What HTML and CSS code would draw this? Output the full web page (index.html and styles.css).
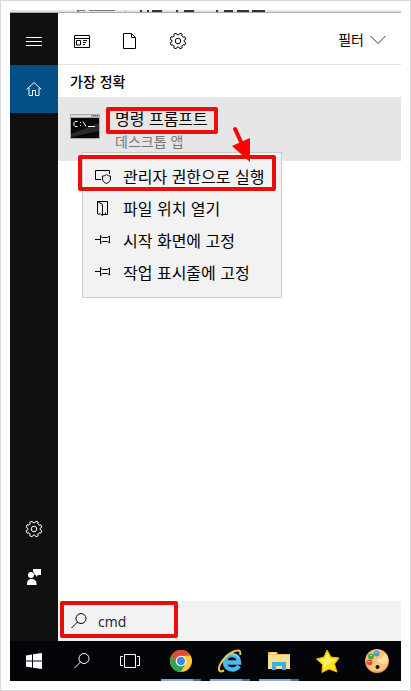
FILE: index.html
```
<!DOCTYPE html>
<html lang="ko">
<head>
    <meta charset="UTF-8">
    <meta name="viewport" content="width=device-width, initial-scale=1.0">
    <title>명령 프롬프트</title>
    <link rel="stylesheet" href="styles.css">
</head>
<body>
    <!-- Shared icon shapes -->
    <svg class="defs" aria-hidden="true">
        <symbol id="gear" viewBox="-9 -9 18 18">
            <path d="M7.8 1.9 6.8 4.2 5 3.8 3.8 5 4.2 6.8 1.9 7.8.9 6.2-.9 6.2-1.9 7.8-4.2 6.8-3.8 5-5 3.8-6.8 4.2-7.8 1.9-6.2.9-6.2-.9-7.8-1.9-6.8-4.2-5-3.8-3.8-5-4.2-6.8-1.9-7.8-.9-6.2.9-6.2 1.9-7.8 4.2-6.8 3.8-5 5-3.8 6.8-4.2 7.8-1.9 6.2-.9 6.2.9Z"/>
            <circle r="2.8"/>
        </symbol>
        <symbol id="search" viewBox="0 0 18 18">
            <circle cx="11" cy="6.500" r="5"/>
            <path d="M7.500 10 1.500 16"/>
        </symbol>
        <symbol id="pin" viewBox="0 0 18 18">
            <path d="M1 8.500h5.500M6.500 4v9M6.500 5.500l2 1h5l2-1.500v7l-2-1.500h-5l-2 1"/>
        </symbol>
    </svg>

    <div class="frame">
        <!-- Bottom edge of the window behind -->
        <div class="behind">
            <svg width="260" height="3" aria-hidden="true">
                <path stroke="#777" d="M67 .5h8M67 1.500h2M79 .5h26"/>
                <path stroke="#bbb" d="M115.500 0v2"/>
                <path stroke="#333" stroke-width="2" d="M131 0v2M138 0v2M142 1h10M167 0v2M175 1h9M175 0v2M183 0v2M207 0v2M214 1h9M227 1h12M242 1h13"/>
            </svg>
        </div>

        <div class="start">
            <nav class="sidebar">
                <button class="side-btn menu-btn" aria-label="메뉴">
                    <svg class="icon" width="18" height="18"><path d="M1 5.500h16M1 9.500h16M1 13.500h16"/></svg>
                </button>
                <button class="side-btn home-btn" aria-label="홈">
                    <svg class="icon" width="18" height="18"><path d="M1.500 9.500 9 2.500l7.500 7M4 8v7.500h3.500v-5h3v5H14V8"/></svg>
                </button>
                <div class="spacer"></div>
                <button class="side-btn" aria-label="설정">
                    <svg class="icon" width="18" height="18"><use href="#gear"/></svg>
                </button>
                <button class="side-btn" aria-label="피드백">
                    <svg width="18" height="18" fill="#fff"><path d="M8 1h8v6h-3l-2 2V7H9.500A4 4 0 0 0 8 3.500Z"/><circle cx="6" cy="7" r="3"/><path d="M2 17v-1.500C2 12.500 4 11 6.500 11s5 1.500 5 4.500V17Z"/></svg>
                </button>
            </nav>

            <main class="panel">
                <header class="toolbar">
                    <button class="tool" aria-label="앱">
                        <svg class="icon" width="18" height="18"><path d="M1.500 3.500h15v12h-15zM1.500 6.500h15M3.500 8.500h4v4.500h-4zM10 8.500h4M10 10.500h3M10 12.500h2"/></svg>
                    </button>
                    <button class="tool" aria-label="문서">
                        <svg class="icon" width="18" height="18"><path d="M2.500 1.500h8l4 4v11h-12zM10.500 1.500v4h4"/></svg>
                    </button>
                    <button class="tool" aria-label="설정">
                        <svg class="icon" width="18" height="18"><use href="#gear"/></svg>
                    </button>
                    <button class="filter">필터
                        <svg class="icon" width="16" height="18"><path d="M.5 6 8 13.500 15.500 6"/></svg>
                    </button>
                </header>

                <h2 class="group-title">가장 정확</h2>

                <div class="result">
                    <svg class="app-icon" width="30" height="26" aria-hidden="true">
                        <path fill="#aaa" d="M0 0h30v25H0z"/>
                        <path fill="#ddd" d="M1 1h20v2H1z"/>
                        <path fill="#555" d="M23 1h1v1h-1zM25 1h1v1h-1zM27 1h1v1h-1z"/>
                        <path fill="#080808" d="M1 4h28v20H1z"/>
                        <path fill="#2a2a2a" d="M1 20 29 9v8L1 23z"/>
                        <path fill="none" stroke="#fff" d="M7.500 7.500H5l-1 1v3l1 1h2.500M10 8.500h1M10 11.500h1M13 7.500l3 5M18 12.500h7"/>
                    </svg>
                    <div class="result-text">
                        <a class="result-name" href="#">명령 프롬프트<span class="mark mark-name"></span></a>
                        <span class="result-type">데스크톱 앱</span>
                    </div>

                    <ul class="context-menu">
                        <li>
                            <button class="menu-item">
                                <svg class="icon" width="18" height="18"><path d="M7 12.500H1.500v-9h14V7"/><path d="M12.500 7.500c1 1 2.500 1.500 4 1.500v3c0 2-1.500 3.500-4 4.500-2.500-1-4-2.500-4-4.500V9c1.500 0 3-.5 4-1.500Z"/></svg>
                                관리자 권한으로 실행
                            </button>
                            <span class="mark mark-item"></span>
                        </li>
                        <li>
                            <button class="menu-item">
                                <svg class="icon" width="18" height="18"><path d="M3.500 2.500h10v13h-5M3.500 2.500l5 3v11l-2-1.500H3.500zM11.500 13.500v2"/></svg>
                                파일 위치 열기
                            </button>
                        </li>
                        <li>
                            <button class="menu-item">
                                <svg class="icon" width="18" height="18"><use href="#pin"/></svg>
                                시작 화면에 고정
                            </button>
                        </li>
                        <li>
                            <button class="menu-item">
                                <svg class="icon" width="18" height="18"><use href="#pin"/></svg>
                                작업 표시줄에 고정
                            </button>
                        </li>
                    </ul>

                    <svg class="arrow" width="20" height="38" aria-hidden="true">
                        <path stroke="#f00" stroke-width="4" stroke-linecap="round" d="M4 4l7 15"/>
                        <path fill="#f00" d="M1 21 19 13v24z"/>
                    </svg>
                </div>

                <div class="spacer"></div>

                <div class="search">
                    <svg class="icon" width="18" height="18"><use href="#search"/></svg>
                    <input type="text" value="cmd" aria-label="검색">
                    <span class="mark mark-search"></span>
                </div>
            </main>
        </div>

        <footer class="taskbar">
            <button class="task" aria-label="시작">
                <svg width="18" height="18" fill="#fff"><path d="M1 3.500 7 2.500V8.500H1zM8 2.300 17 1v7.500H8zM1 9.500h6v6L1 14.700zM8 9.500h9V17l-9-1.300z"/></svg>
            </button>
            <button class="task" aria-label="검색">
                <svg class="icon" width="18" height="18"><use href="#search"/></svg>
            </button>
            <button class="task" aria-label="작업 보기">
                <svg class="icon" width="20" height="18"><path d="M4.500 2.500h11v13h-11zM3 4.500H.5v9H3M17 4.500h2.500v9H17"/></svg>
            </button>
            <div class="apps">
                <button class="task app running" aria-label="Chrome">
                    <svg width="24" height="24" viewBox="-12 -12 24 24">
                        <circle r="11" fill="#fc3"/>
                        <path fill="#df4b3d" d="M-9.500-5.500A11 11 0 0 1 9.500-5.500L0-5-4.500 2.500Z"/>
                        <path fill="#2fa455" d="M-9.500-5.500A11 11 0 0 0 0 11L4.500 2.500 0 5-4.300 2.500Z"/>
                        <circle r="5.300" fill="#fff"/>
                        <circle r="4.200" fill="#4586ea"/>
                    </svg>
                </button>
                <button class="task app running" aria-label="Internet Explorer">
                    <svg width="26" height="26" viewBox="0 0 26 26" fill="none">
                        <path stroke="#49b9ee" stroke-width="4.500" d="M8 14.500h14C22 9.500 19 7 15 7S8 10 8 14.500s3 7 7.500 7c3 0 5-1.500 6.500-3.500"/>
                        <path stroke="#a8e3fb" d="M7 12c1-4 4-6 8-6 3 0 6 2 7 4"/>
                        <path stroke="#edc344" stroke-width="2" d="M23 7c1-3 0-5-3-4.500C13 3.500 3 13 2 20c-.5 4 2 4 5 2.500"/>
                    </svg>
                </button>
                <button class="task app running" aria-label="파일 탐색기">
                    <svg width="24" height="22">
                        <path fill="#e9bd58" d="M1 2h9l1 2h12v15H1z"/>
                        <path fill="#fadf93" d="M1 5h22v14H1z"/>
                        <path fill="#fff" d="M3 3h6v1H3z"/>
                        <path fill="#3faee0" d="M5 20v-8h14v8h-4v-4H9v4z"/>
                    </svg>
                </button>
                <button class="task app" aria-label="즐겨찾기">
                    <svg width="26" height="26">
                        <path fill="#ffe01c" stroke="#f4b900" stroke-linejoin="round" d="M12 2l4 7 8 1-4.500 6 2.500 8-8-3-7 3.500.5-8L1.500 11l7.500-2Z"/>
                        <path fill="#fff36a" d="M12 5l2.500 6 6 .5L15 15l-7 5 1-6-4-2.500 5-1Z"/>
                    </svg>
                </button>
                <button class="task app" aria-label="그림판">
                    <svg width="26" height="26">
                        <circle cx="13" cy="13" r="12" fill="#e99a4c"/>
                        <circle cx="13" cy="12.500" r="11" fill="#f9c57c"/>
                        <path fill="#fbdca5" d="M13 12c4-1 8-4 8-7 3 3 4 8 2 11-3 0-8 0-10-4Z"/>
                        <circle cx="12.500" cy="5.500" r="3" fill="#3fa0c8"/>
                        <circle cx="7" cy="8.500" r="3" fill="#55a63d"/>
                        <circle cx="5.500" cy="14.500" r="3" fill="#e0523c"/>
                        <path fill="#fff" opacity=".6" d="M11 4h2v1h-2zM6 7h2v1H6zM4 13h2v1H4z"/>
                        <circle cx="13.500" cy="19" r="2" fill="#111"/>
                    </svg>
                </button>
            </div>
        </footer>
    </div>
</body>
</html>
```
FILE: styles.css
```
* {
    box-sizing: border-box;
}
body {
    margin: 0;
    font-family: "Noto Sans CJK KR", sans-serif;
    font-size: 14px;
    color: #000;
    background: #fff;
}
button {
    display: flex;
    align-items: center;
    justify-content: center;
    padding: 0;
    border: 0;
    background: none;
    color: inherit;
    font: inherit;
}
svg {
    display: block;
    flex: none;
}
.defs {
    position: absolute;
    width: 0;
    height: 0;
}
.icon {
    fill: none;
    stroke: currentColor;
    stroke-width: 1;
}
.spacer {
    flex: 1;
}
.frame {
    display: flex;
    flex-direction: column;
    min-height: 100vh;
    padding: 9px;
    border: 1px solid #dadada;
}
.behind {
    height: 3px;
    overflow: hidden;
    background: #e4e4e4;
    border-bottom: 1px solid #a8a8a8;
}
.start {
    display: flex;
    flex: 1;
}

/* Left rail */
.sidebar {
    display: flex;
    flex-direction: column;
    width: 48px;
    padding-bottom: 40px;
    background: #101010;
    color: #fff;
}
.side-btn {
    height: 48px;
}
.menu-btn {
    height: 52px;
    padding-top: 4px;
}
.home-btn {
    background: #044e88;
}

/* Results */
.panel {
    display: flex;
    flex: 1;
    flex-direction: column;
    min-width: 0;
}
.toolbar {
    display: flex;
    align-items: center;
    height: 52px;
    padding: 4px 15px 0 0;
    border-bottom: 1px solid #e0e0e0;
}
.tool {
    width: 48px;
    height: 47px;
}
.filter {
    gap: 6px;
    margin-left: auto;
    padding-bottom: 4px;
}
.filter .icon {
    color: #333;
}
.group-title {
    margin: 0;
    padding: 0 12px;
    font-size: 14px;
    font-weight: 500;
    line-height: 32px;
}
.result {
    position: relative;
    display: flex;
    gap: 15px;
    height: 64px;
    padding: 10px 12px;
    background: #e6e6e6;
}
.app-icon {
    margin-top: 7px;
}
.result-name,
.result-type {
    display: block;
    width: max-content;
}
.result-name {
    position: relative;
    padding-bottom: 2px;
    color: #000;
    font-size: 16px;
    line-height: 22px;
    text-decoration: none;
}
.result-type {
    color: #777;
    line-height: 20px;
}

/* Context menu over the results */
.context-menu {
    position: absolute;
    top: 55px;
    left: 24px;
    width: 200px;
    margin: 0;
    padding: 8px 0;
    border: 1px solid #ccc;
    background: #f2f2f2;
    list-style: none;
}
.context-menu li {
    position: relative;
}
.menu-item {
    justify-content: flex-start;
    gap: 11px;
    width: 100%;
    height: 32px;
    padding: 0 0 2px 11px;
    font-size: 16px;
    white-space: nowrap;
}
.search {
    position: relative;
    display: flex;
    align-items: center;
    gap: 10px;
    height: 40px;
    padding: 0 12px;
    background: #f2f2f2;
}
.search input {
    flex: 1;
    min-width: 0;
    padding: 0;
    border: 0;
    outline: 0;
    background: none;
    color: #222;
    font-family: "Open Sans", sans-serif;
    font-size: 14px;
}

/* Red highlights */
.mark {
    position: absolute;
    border: 4px solid #e90d0d;
    border-radius: 2px;
    pointer-events: none;
}
.mark-name {
    inset: 0 -10px -3px -9px;
}
.mark-item {
    inset: -6px 5px 2px -5px;
}
.mark-search {
    top: 0;
    bottom: 3px;
    left: 2px;
    width: 118px;
}
.arrow {
    position: absolute;
    top: 28px;
    left: 173px;
}

/* Taskbar */
.taskbar {
    display: flex;
    height: 40px;
    background: #020408;
    color: #fff;
}
.task {
    width: 48px;
}
.apps {
    display: flex;
    padding-left: 2px;
}
.app {
    position: relative;
    width: 49px;
}
.running::after {
    content: "";
    position: absolute;
    right: 4px;
    bottom: 0;
    left: 5px;
    height: 2px;
    border-right: 8px solid #4d6c90;
    background: #82abd6;
}
```
